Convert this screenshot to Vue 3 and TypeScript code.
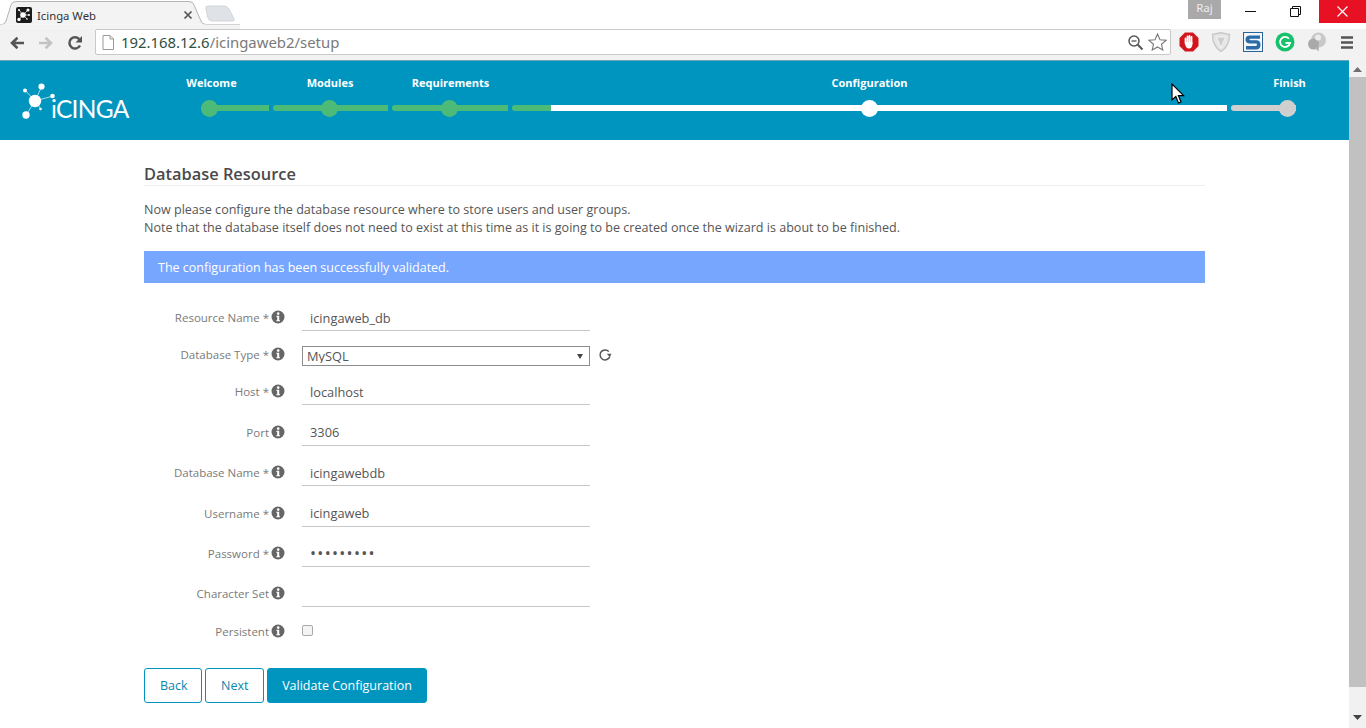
<script setup lang="ts">
interface Step { label: string; width: number; dot: number; labelX: number; dotColor: string; segs: { w: number; color: string }[] }
const green = '#4dbb78';
const white = '#ffffff';
const grey = '#cfcfcf';
const steps: Step[] = [
  { label: 'Welcome', width: 68, dot: 8.5, labelX: 10.5, dotColor: green, segs: [{ w: 68, color: green }] },
  { label: 'Modules', width: 115, dot: 56.5, labelX: 57, dotColor: green, segs: [{ w: 115, color: green }] },
  { label: 'Requirements', width: 116, dot: 57.5, labelX: 58.5, dotColor: green, segs: [{ w: 116, color: green }] },
  { label: 'Configuration', width: 715, dot: 357.5, labelX: 357.5, dotColor: white, segs: [{ w: 39, color: green }, { w: 676, color: white }] },
  { label: 'Finish', width: 65, dot: 56.5, labelX: 58.5, dotColor: grey, segs: [{ w: 65, color: grey }] },
];
interface Field { label: string; req: boolean; value: string; type: string; cls: string }
const fields: Field[] = [
  { label: 'Resource Name', req: true, value: 'icingaweb_db', type: 'text', cls: 'first' },
  { label: 'Database Type', req: true, value: 'MySQL', type: 'select', cls: 'sel' },
  { label: 'Host', req: true, value: 'localhost', type: 'text', cls: '' },
  { label: 'Port', req: false, value: '3306', type: 'text', cls: '' },
  { label: 'Database Name', req: true, value: 'icingawebdb', type: 'text', cls: '' },
  { label: 'Username', req: true, value: 'icingaweb', type: 'text', cls: '' },
  { label: 'Password', req: true, value: 'icingaweb', type: 'password', cls: '' },
  { label: 'Character Set', req: false, value: '', type: 'text', cls: '' },
  { label: 'Persistent', req: false, value: '', type: 'checkbox', cls: 'chk' },
];
</script>

<template>
  <div class="app">
    <div class="tabstrip">
      <svg class="tab-shape" width="240" height="29" viewBox="0 0 240 29">
        <path d="M206 9 Q205 6 208 6 L224 6 Q227 6 229 9 L234 19 Q235 21 232 21 L212 21 Q209 21 208 18 Z" fill="#dfe2e6" stroke="#d0d3d8" />
        <path d="M0 24.5 H2 Q5 24.5 6 21 L11 5 Q12 1.5 16 1.5 H189 Q193 1.5 194 5 L201 21 Q202 24.5 206 24.5 H240" fill="#f3f3f3" stroke="#b4b4b4" stroke-width="1" />
        <path d="M0 24.5 V29 H240 V24.5 Z" fill="#f3f3f3" />
      </svg>
      <div class="tab">
        <svg class="favicon" width="16" height="16" viewBox="0 0 16 16">
          <rect width="16" height="16" rx="2" fill="#1b1b1b" />
          <path d="M7 8 12 3M7 8 3 12.5M7 8 3 3M7 8H13M7 8 11 12" stroke="#fff" stroke-width=".7" />
          <circle cx="7" cy="8" r="2.8" fill="#fff" />
          <circle cx="12" cy="3" r="1.6" fill="#fff" />
          <circle cx="3" cy="12.5" r="1.7" fill="#fff" />
          <circle cx="3" cy="3" r="1" fill="#fff" />
          <circle cx="13" cy="8" r="1" fill="#fff" />
          <circle cx="11" cy="12" r=".8" fill="#fff" />
        </svg>
        <span class="tab-title">Icinga Web</span>
        <svg class="tab-x" width="10" height="10" viewBox="0 0 10 10"><path d="M1.5 1.500 8.500 8.500M8.500 1.500 1.500 8.500" stroke="#555" stroke-width="1.700" /></svg>
      </div>
      <div class="win">
        <span class="raj">Raj</span>
        <div class="wbtn"><svg width="11" height="11" viewBox="0 0 11 11"><path d="M0 5.500H11" stroke="#111" stroke-width="1" /></svg></div>
        <div class="wbtn restore"><svg width="11" height="11" viewBox="0 0 11 11"><path d="M.5 2.500H8.500V10.500H.5ZM2.500 2.500V.5H10.500V8.500H8.500" fill="none" stroke="#111" stroke-width="1" /></svg></div>
        <div class="wclose"><svg width="11" height="11" viewBox="0 0 11 11"><path d="M.5 .5 10.500 10.500M10.500 .5 .5 10.500" stroke="#fff" stroke-width="1.200" /></svg></div>
      </div>
    </div>

    <div class="toolbar">
      <svg class="nav" width="16" height="16" viewBox="0 0 16 16"><path d="M15 8H4M8.500 2.800 3 8l5.500 5.200" fill="none" stroke="#555" stroke-width="2.600" /></svg>
      <svg class="nav" width="16" height="16" viewBox="0 0 16 16"><path d="M1 8H12M7.500 2.800 13 8l-5.500 5.200" fill="none" stroke="#c3c3c3" stroke-width="2.600" /></svg>
      <svg class="nav" width="16" height="16" viewBox="0 0 16 16"><path d="M13 10.500A5.600 5.600 0 1 1 12.500 4.500" fill="none" stroke="#555" stroke-width="2.500" /><path d="M15 1V7.500H8.500Z" fill="#555" /></svg>
      <div class="omni">
        <svg width="12" height="15" viewBox="0 0 12 15"><path d="M1 .5H8L11.500 4V14.500H1ZM8 .5V4H11.500" fill="#fff" stroke="#9a9a9a" /></svg>
        <span class="url"><span class="host">192.168.12.6</span>/icingaweb2/setup</span>
        <svg class="omni-zoom" width="17" height="17" viewBox="0 0 17 17"><circle cx="7" cy="7" r="5" fill="none" stroke="#555" stroke-width="1.500" /><path d="M4.500 7H9.500" stroke="#555" stroke-width="1.300" /><path d="M10.800 10.800 15.500 15.500" stroke="#555" stroke-width="2" /></svg>
        <svg width="19" height="18" viewBox="0 0 19 18"><path d="M9.500 1 12 6.700 18 7.300 13.500 11.300 14.800 17 9.500 14 4.200 17 5.500 11.300 1 7.300 7 6.700Z" fill="#fff" stroke="#777" stroke-width="1.100" /></svg>
      </div>
      <div class="exts">
        <svg width="20" height="20" viewBox="0 0 20 20"><path d="M6 .5H14L19.500 6V14L14 19.500H6L.5 14V6Z" fill="#d3161d" /><path d="M6.500 11V6.500M8.500 11V4.500M10.500 11V4M12.500 11V5" stroke="#fff" stroke-width="1.800" stroke-linecap="round" /><path d="M6 10H13.500V12Q13 16.500 10 16.500 7 16.500 6 12Z" fill="#fff" /></svg>
        <svg width="20" height="20" viewBox="0 0 20 20"><path d="M1.500 2.500 10 .8 18.500 2.500Q18.500 14 10 19.500 1.500 14 1.500 2.500Z" fill="#e6e6e6" stroke="#c8c8c8" stroke-width="1.400" /><path d="M5.500 5H14.500L10 16Z" fill="#cfcfcf" stroke="#f3f3f3" /></svg>
        <svg width="20" height="20" viewBox="0 0 20 20"><rect x=".5" y=".5" width="19" height="19" fill="#f2f6fa" stroke="#2a6496" /><path d="M17 3.500H7Q2.500 3.500 2.500 7.500T7 11.500H13Q14 11.500 14 12.500T13 14H3V17.500H13Q17.500 17.500 17.500 12.800T13 8.300H7.500Q6.500 8.300 6.500 7.500T7.500 6.800H17Z" fill="#2b6ca8" /></svg>
        <svg width="20" height="20" viewBox="0 0 20 20"><circle cx="10" cy="10" r="9.500" fill="#15c26b" /><path d="M14 6.800A5 5 0 1 0 15 11H10.500" fill="none" stroke="#fff" stroke-width="1.800" /></svg>
        <svg width="20" height="20" viewBox="0 0 20 20"><circle cx="11.500" cy="8" r="7.500" fill="#c8c8c8" /><circle cx="6.500" cy="12" r="5.500" fill="#a9a9a9" /><circle cx="11" cy="5.500" r="3" fill="#ececec" /><path d="M8 16 11.500 19.500 12 14Z" fill="#b0b0b0" /></svg>
        <svg class="menu" width="14" height="13" viewBox="0 0 14 13"><path d="M1 1.500H13M1 6.500H13M1 11.500H13" stroke="#555" stroke-width="2.400" /></svg>
      </div>
    </div>

    <div class="viewport">
      <div class="page">
        <header class="wizard">
          <div class="logo">
            <svg class="logo-mark" width="34" height="38" viewBox="0 0 34 38">
              <path d="M13 18 20 3M13 18 3 7M13 18 4 32M13 18 31 13M13 18 19 26" stroke="#cfeaf3" stroke-width=".8" />
              <circle cx="13" cy="18" r="6.200" fill="#fff" />
              <circle cx="19.500" cy="3.500" r="3.100" fill="#fff" />
              <circle cx="3" cy="7.500" r="2" fill="#fff" />
              <circle cx="4" cy="32" r="3.700" fill="#fff" />
              <circle cx="30.500" cy="13" r="2.300" fill="#fff" />
              <circle cx="18.500" cy="26" r="1.300" fill="#fff" />
            </svg>
            <span class="logo-text">iCINGA</span>
          </div>
          <div class="steps">
            <div v-for="s in steps" :key="s.label" class="step" :style="{ width: s.width + 'px' }">
              <div class="step-label" :style="{ marginLeft: s.labelX + 'px' }">{{ s.label }}</div>
              <div class="track">
                <span v-for="(g, i) in s.segs" :key="i" class="seg" :style="{ width: g.w + 'px', background: g.color }"></span>
                <span class="dot" :style="{ left: s.dot + 'px', background: s.dotColor }"></span>
              </div>
            </div>
          </div>
        </header>

        <main class="content">
          <h2 class="title">Database Resource</h2>
          <p class="intro">Now please configure the database resource where to store users and user groups.<br />Note that the database itself does not need to exist at this time as it is going to be created once the wizard is about to be finished.</p>
          <div class="banner">The configuration has been successfully validated.</div>

          <form class="form" @submit.prevent>
            <div v-for="f in fields" :key="f.label" class="row" :class="f.cls">
              <label class="lab">{{ f.label }}<template v-if="f.req"> *</template>
                <svg class="info" width="14" height="14" viewBox="0 0 14 14"><circle cx="7" cy="7" r="6.500" fill="#666" /><circle cx="7.200" cy="3.600" r="1.300" fill="#fff" /><path d="M5.300 5.800H8.200V10.300H9V11.300H5.300V10.300H6.200V6.800H5.300Z" fill="#fff" /></svg>
              </label>
              <div class="ctl">
                <input v-if="f.type === 'text'" class="inp" type="text" :value="f.value" readonly />
                <input v-else-if="f.type === 'password'" class="inp pw" type="password" :value="f.value" readonly />
                <template v-else-if="f.type === 'select'">
                  <span class="sel-wrap">
                    <select class="select"><option>{{ f.value }}</option></select>
                    <svg class="caret" width="6" height="5" viewBox="0 0 6 5"><path d="M0 0H6L3 5Z" fill="#444" /></svg>
                  </span>
                  <svg class="refresh" width="14" height="14" viewBox="0 0 14 14"><path d="M11.800 8.500A5 5 0 1 1 10.800 3.600" fill="none" stroke="#555" stroke-width="1.500" /><path d="M13.500 5.800H8.800L11.800 9Z" fill="#555" /></svg>
                </template>
                <input v-else class="check" type="checkbox" />
              </div>
            </div>
            <div class="buttons">
              <button class="btn" type="button">Back</button>
              <button class="btn" type="button">Next</button>
              <button class="btn primary" type="button">Validate Configuration</button>
            </div>
          </form>
        </main>
      </div>

      <div class="scrollbar">
        <svg class="arrow" width="9" height="5" viewBox="0 0 9 5"><path d="M4.500 0 9 5H0Z" fill="#6e6e6e" /></svg>
        <div class="thumb"></div>
        <svg class="arrow" width="9" height="5" viewBox="0 0 9 5"><path d="M0 0H9L4.500 5Z" fill="#444" /></svg>
      </div>

      <svg class="cursor" width="14" height="21" viewBox="0 0 14 21"><path d="M1 1V17L4.800 13.500 7.500 20 10 19 7.400 12.600H12.600Z" fill="#fff" stroke="#000" stroke-width="1.200" /></svg>
    </div>
  </div>
</template>

<style>
html, body { margin: 0; padding: 0; background: #fff; overflow: hidden; }
</style>

<style scoped>
.app { width: 1366px; height: 728px; display: flex; flex-direction: column; overflow: hidden; font-family: "Open Sans", "Noto Sans", sans-serif; color: #535353; }
.tabstrip { position: relative; height: 29px; background: #fff; display: flex; justify-content: space-between; flex: none; }
.tab-shape { position: absolute; left: 0; top: 0; }
.tab { position: relative; display: flex; align-items: center; width: 193px; padding-left: 16px; padding-top: 3px; box-sizing: border-box; height: 27px; }
.favicon { flex: none; }
.tab-title { margin-left: 5px; font: 11.300px "Noto Sans", sans-serif; color: #333; flex: 1; }
.tab-x { flex: none; }
.win { position: relative; display: flex; align-items: flex-start; height: 23px; }
.raj { width: 33px; height: 19px; background: #a9a9a9; color: #ececec; font: 11.500px/16px "Noto Sans", sans-serif; text-align: center; margin-right: 7px; }
.wbtn { width: 45.500px; height: 23px; display: flex; align-items: center; justify-content: center; }
.wbtn.restore { padding-right: 2px; box-sizing: border-box; }
.wclose { width: 47px; height: 23px; background: #e81123; display: flex; align-items: center; justify-content: center; }

.toolbar { height: 31px; flex: none; background: #f2f2f2; display: flex; align-items: flex-start; padding: 6px 0 0 9px; box-sizing: border-box; }
.nav { margin-right: 13px; flex: none; }
.omni { margin-left: -1px; width: 1076px; height: 26px; margin-top: -6px; box-sizing: border-box; background: #fff; border: 1px solid #c9c9c9; border-radius: 2px; display: flex; align-items: center; padding: 0 3px 0 6px; }
.url { margin-left: 7px; flex: 1; font: 14.900px "Noto Sans", sans-serif; color: #7a7a7a; white-space: nowrap; }
.host { color: #2f4f3f; }
.omni-zoom { margin-right: 4px; }
.exts { display: flex; align-items: center; gap: 12px; margin-left: 8px; margin-top: -3px; }
.menu { margin-left: 1px; }

.viewport { position: relative; flex: 1; display: flex; min-height: 0; }
.page { flex: 1; min-width: 0; background: #fff; }
.wizard { height: 80px; background: #0095bf; border-top: 1px solid #6fa7b8; display: flex; box-sizing: border-box; padding: 0 0 0 22px; }
.logo { display: flex; align-items: flex-start; width: 179px; position: relative; }
.logo-mark { margin-top: 22px; flex: none; }
.logo-text { margin: 31px 0 0 -5px; font: 400 24.500px/34px "Lato", sans-serif; color: #fff; letter-spacing: -.7px; }
.steps { display: flex; gap: 4px; }
.step { flex: none; padding-top: 14px; }
.step-label { width: max-content; transform: translateX(-50%); font: 700 11px/16px "Open Sans", sans-serif; color: #fff; white-space: nowrap; height: 30px; }
.track { position: relative; display: flex; height: 6px; }
.seg { display: block; height: 6px; }
.seg:first-child { border-radius: 3px 0 0 3px; }
.seg:last-of-type { border-radius: 0 3px 3px 0; }
.seg:only-of-type { border-radius: 3px; }
.dot { position: absolute; top: -5px; width: 17px; height: 17px; margin-left: -8.500px; border-radius: 50%; }

.content { padding: 0 144px; }
.title { margin: 0; padding-top: 24px; height: 21px; font: 600 16.400px/20px "Open Sans", sans-serif; color: #4a4a4a; border-bottom: 1px solid #eeeeee; }
.intro { margin: 15px 0 0; font: 12.560px/18px "Open Sans", sans-serif; color: #555; }
.banner { margin-top: 14px; height: 32px; background: #77a6ff; color: #fff; padding-left: 14px; font: 12.500px/33px "Open Sans", sans-serif; }
.form { margin-top: 20px; }
.row { display: flex; height: 28.400px; margin-bottom: 12px; align-items: flex-start; }
.row.first { margin-bottom: 15px; height: 28px; }
.row.sel { height: 20px; margin-bottom: 11.400px; }
.row.chk { height: 18px; margin-top: 15px; margin-bottom: 0; }
.lab { width: 141px; flex: none; text-align: right; font: 11.500px/30px "Open Sans", sans-serif; color: #7a7a7a; white-space: nowrap; }
.sel .lab { line-height: 18px; }
.chk .lab { line-height: 18px; }
.info { vertical-align: -2px; margin-left: 2px; }
.ctl { margin-left: 17px; display: flex; align-items: center; }
.inp { width: 288px; height: 28px; box-sizing: border-box; border: 0; border-bottom: 1px solid #c8c8c8; outline: 0; padding: 2px 8px 0; background: #fff; font: 12.800px "Open Sans", sans-serif; color: #555; }
.inp.pw { font-size: 16px; letter-spacing: 1.300px; }
.sel-wrap { position: relative; display: block; width: 288px; height: 20px; }
.select { appearance: none; width: 288px; height: 20px; box-sizing: border-box; border: 1px solid #8c8c8c; border-radius: 0; background: #fff; padding: 0 4px 2px; font: 12.800px "Open Sans", sans-serif; color: #555; display: block; outline: 0; }
.caret { position: absolute; right: 7px; top: 8px; }
.refresh { margin-left: 8px; margin-top: -2px; }
.check { appearance: none; margin: 2px 0 0; width: 11px; height: 11px; box-sizing: border-box; border: 1px solid #a9a9a9; border-radius: 2px; background: #f4f4f4; }
.buttons { margin-top: 27.500px; display: flex; gap: 3px; }
.btn { height: 35px; box-sizing: border-box; padding: 0 15px; background: #fff; border: 1px solid #0095bf; border-radius: 3px; color: #0a86ad; font: 12.500px "Open Sans", sans-serif; width: 58px; }
.btn + .btn { width: 59px; }
.btn.primary { width: 160px; padding: 0; background: #0095bf; color: #fff; }

.scrollbar { width: 17px; flex: none; background: #f1f1f1; display: flex; flex-direction: column; align-items: center; }
.arrow { flex: none; margin: 7px 0 5px; }
.thumb { flex: 1; width: 17px; background: #c1c1c1; }
.scrollbar .arrow:last-child { margin: 28px 0 8px; }
.cursor { position: absolute; left: 1171px; top: 23px; }
</style>
